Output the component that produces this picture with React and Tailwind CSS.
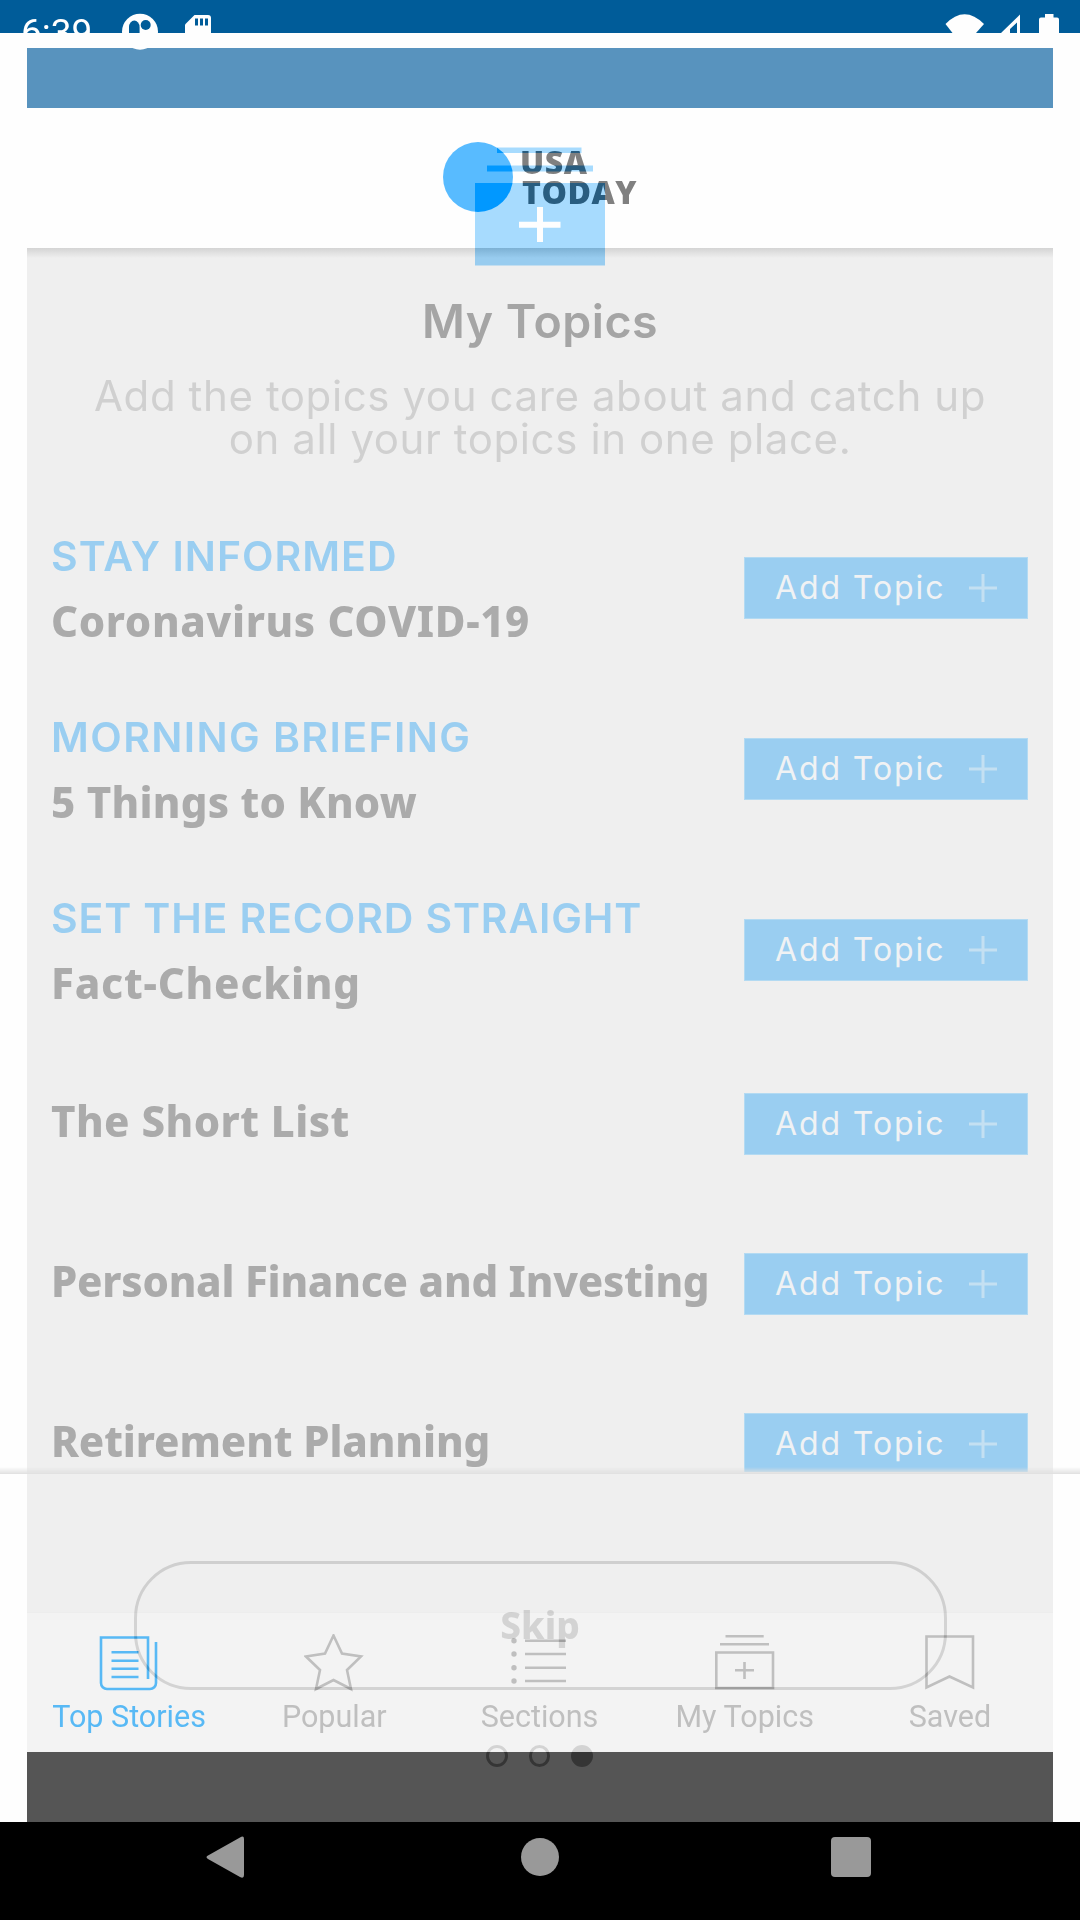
import React from "react";

const TOPICS = [
  { kicker: "STAY INFORMED", name: "Coronavirus COVID-19", kickerTracking: "tracking-[1.0px]", tracking: "tracking-[0.65px]" },
  { kicker: "MORNING BRIEFING", name: "5 Things to Know", kickerTracking: "tracking-[1.4px]", tracking: "tracking-[0.25px]" },
  { kicker: "SET THE RECORD STRAIGHT", name: "Fact-Checking", kickerTracking: "tracking-[0.85px]", tracking: "tracking-[0.8px]" },
  { name: "The Short List", tracking: "tracking-[0.45px]" },
  { name: "Personal Finance and Investing", tracking: "tracking-[-0.23px]" },
  { name: "Retirement Planning", tracking: "tracking-[-0.1px]" },
];

function StatusBar() {
  return (
    <header className="relative z-10 flex h-[33px] justify-between bg-[#005c99]">
      <div className="flex">
        <div className="ml-[21px] h-[33px] w-[98px] overflow-hidden pt-[12px] font-['Roboto'] text-[37px] leading-[42px] text-white">
          6:39
        </div>
        {/* Notification badge hangs below the bar */}
        <svg width="44" height="52" viewBox="119 0 44 52" className="shrink-0">
          <circle cx="140" cy="31.7" r="18" fill="#fefefe" />
          <path d="M129 33V27a5.3 6.5 0 0 1 10.6 0V33Z" fill="#005c99" />
          <circle cx="145.7" cy="25" r="5" fill="#005c99" />
        </svg>
        <svg width="30" height="33" viewBox="183 0 30 33" className="ml-5 shrink-0">
          <path d="M185 33V24.500L194.500 15H208a3 3 0 0 1 3 3V33Z" fill="#fefefe" />
          <path d="M195 18.500h3v7h-3zM200 18.500h3v7h-3zM205 18.500h3v7h-3z" fill="#005c99" />
        </svg>
      </div>
      <svg width="140" height="33" viewBox="940 0 140 33">
        <path d="M945.500 24Q964.500 4.500 984 24L976 33H952.500Z" fill="#fefefe" />
        <path d="M1001 33L1020 14.500V33H1017V22.500L1010 29V33Z" fill="#fefefe" />
        <path d="M1039 33V19.500a2 2 0 0 1 2-2H1045V14H1053.500V17.500H1057a2 2 0 0 1 2 2V33Z" fill="#fefefe" />
      </svg>
    </header>
  );
}

function Brand() {
  return (
    <div className="flex h-[140px] items-start pl-[416px] pt-[34px]">
      <div className="size-[70px] rounded-full bg-[#58bbff]" />
      <div className="ml-[7px] pt-[5px] font-['Open_Sans'] text-[32px] font-extrabold leading-[30px] tracking-[0.5px] text-[#808080]">
        <div>USA</div>
        <div className="pl-[2px]">TODAY</div>
      </div>
    </div>
  );
}

const TabIcon = ({ children }) => (
  <svg width="60" height="60" viewBox="0 0 60 60" fill="none" stroke="currentColor" strokeWidth="2.6">
    {children}
  </svg>
);

const TABS = [
  {
    label: "Top Stories",
    active: true,
    icon: (
      <TabIcon>
        <path d="M57 8V49a6 6 0 0 1-6 6H8a6 6 0 0 1-6-6V3.500H49V45M12.500 18.300H39.500M12.500 26.700H39.500M12.500 34.700H39.500M12.500 43H39.500" />
      </TabIcon>
    ),
  },
  {
    label: "Popular",
    icon: (
      <TabIcon>
        <path d="M29.500 1.500L38 19.500L57 22.500L43 36L47 55L29.500 46L12 55L16 36L2 22.500L21 19.500Z" />
      </TabIcon>
    ),
  },
  {
    label: "Sections",
    icon: (
      <TabIcon>
        <path d="M16 6.700H57M16 20H57M16 33.700H57M16 47H57" />
        <g fill="currentColor" stroke="none">
          <circle cx="5" cy="6.700" r="2.700" />
          <circle cx="5" cy="20" r="2.700" />
          <circle cx="5" cy="33.700" r="2.700" />
          <circle cx="5" cy="47" r="2.700" />
        </g>
      </TabIcon>
    ),
  },
  {
    label: "My Topics",
    icon: (
      <TabIcon>
        <path d="M10.500 2.300H48.700M5 10.300H54M1.300 18.500H58V54H1.300ZM20 36.300H39M29.500 28V45" />
      </TabIcon>
    ),
  },
  {
    label: "Saved",
    icon: (
      <TabIcon>
        <path d="M6.500 2.500H53V53.500L29.500 42.500L6.500 53.500Z" />
      </TabIcon>
    ),
  },
];

function TabBar() {
  return (
    <nav className="grid h-[140px] grid-cols-5 border-t border-[#ededed] bg-[#f3f3f3]">
      {TABS.map((tab) => (
        <div
          key={tab.label}
          className={
            "flex flex-col items-center pt-[21px] pr-[1px] font-['Roboto'] text-[30.5px] " +
            (tab.active ? "text-[#58b9f5]" : "text-[#bfbfbf]")
          }
        >
          {tab.icon}
          <span className="mt-[5px] leading-[36px]">{tab.label}</span>
        </div>
      ))}
    </nav>
  );
}

function SystemNav() {
  return (
    <footer className="grid h-[98px] grid-cols-[452px_176px_446px] bg-black">
      <div className="flex justify-center pt-[13px]">
        <svg width="44" height="44" viewBox="0 0 44 44">
          <path d="M4 20.500L36 2.500Q40 0 40 4V40Q40 44 36 42L4 24Q1 22 4 20.500Z" fill="#999" />
        </svg>
      </div>
      <div className="flex justify-center pt-[16px]">
        <div className="size-[38px] rounded-full bg-[#999]" />
      </div>
      <div className="flex justify-center pt-[15px]">
        <div className="h-[40px] w-[40px] rounded-[4px] bg-[#999]" />
      </div>
    </footer>
  );
}

function AddButton() {
  return (
    <div className="relative -top-px flex h-[62px] w-[284px] shrink-0 items-center border border-[#b3daf2] bg-[#9acef1] pl-[30px] text-[#f0f2f4]">
      <span className="w-[193px] whitespace-nowrap font-['Inter'] text-[32px] leading-[40px] tracking-[1.9px]">Add Topic</span>
      <svg width="30" height="30" viewBox="0 0 30 30" stroke="#c4e0f2" strokeWidth="3">
        <path d="M1 15H29M15 1V29" />
      </svg>
    </div>
  );
}

/* Fading onboarding step that lies over the home screen */
function Onboarding() {
  return (
    <section className="absolute left-[27px] top-[140px] flex h-[1640px] w-[1026px] flex-col font-['Noto_Sans']">
      <svg width="1026" height="130" viewBox="27 140 1026 130" className="shrink-0 mix-blend-difference">
        <path
          fillRule="evenodd"
          fill="#572300"
          d="M475 183H605V265.500H475ZM519 221.700H537V207H543V221.700H560.500V227.700H543V242H537V227.700H519Z"
        />
        <path fill="#572300" d="M487 165.500H593V171.500H487Z" />
        <path fill="#572300" d="M497 147.500H581.500V153H497Z" />
      </svg>
      <h1 className="mt-[21px] text-center font-['Inter'] text-[46.5px] font-semibold leading-[60px] tracking-[0.5px] text-[#a5a5a5]">My Topics</h1>
      <p className="mt-[23px] text-center font-['Inter'] text-[42px] leading-[43px] tracking-[0.6px] text-[#d0d0d0]">
        Add the topics you care about and catch up
        <br />
        on all your topics in one place.
      </p>
      <div className="mt-[38px] h-[974px] shrink-0 overflow-hidden pl-[24px] pr-[25px]">
        {TOPICS.map((t) =>
          t.kicker ? (
            <div key={t.name} className="flex h-[181px] items-center justify-between">
              <div className="whitespace-nowrap text-[#ababab]">
                <div className={"font-['Inter'] text-[41px] font-semibold leading-[48px] text-[#9acef1] " + t.kickerTracking}>{t.kicker}</div>
                <div className={"mt-[17px] text-[42px] font-extrabold leading-[48px] " + t.tracking}>{t.name}</div>
              </div>
              <AddButton />
            </div>
          ) : (
            <div key={t.name} className="flex h-[160px] items-center justify-between pt-[8px]">
              <div className={"whitespace-nowrap pb-[9px] text-[42px] font-extrabold leading-[48px] text-[#ababab] " + t.tracking}>{t.name}</div>
              <AddButton />
            </div>
          )
        )}
      </div>
      <div className="mt-[89px] flex h-[129px] w-[813px] shrink-0 justify-center self-center rounded-[57px] border-[3px] border-[#202020] pt-[37px] text-[37px] font-extrabold leading-[48px] text-[#202020] mix-blend-difference">
        Skip
      </div>
      <div className="mt-[55px] flex shrink-0 justify-center gap-[21px] pr-[1px] mix-blend-difference">
        <div className="size-[21.500px] rounded-full border-[3px] border-[#202020]" />
        <div className="size-[21.500px] rounded-full border-[3px] border-[#202020]" />
        <div className="size-[21.500px] rounded-full bg-[#202020]" />
      </div>
    </section>
  );
}

export default function App() {
  return (
    <div className="relative isolate flex h-[1920px] w-[1080px] flex-col overflow-hidden bg-[#fefefe]">
      <StatusBar />
      <main className="mx-[27px] mt-[15px] flex flex-1 flex-col">
        <div className="h-[60px] bg-[#5893be]" />
        <Brand />
        <div className="h-[10px] bg-linear-to-b from-[#d4d4d4] to-[#efefef]" />
        <div className="flex-1 bg-[#efefef]" />
        <TabBar />
        <div className="h-[70px] bg-[#555]" />
      </main>
      <SystemNav />
      <Onboarding />
      <div className="absolute left-0 top-[1467px] h-[7px] w-full bg-linear-to-b from-[#e2e2e200] to-[#e0e0e0]" />
    </div>
  );
}
